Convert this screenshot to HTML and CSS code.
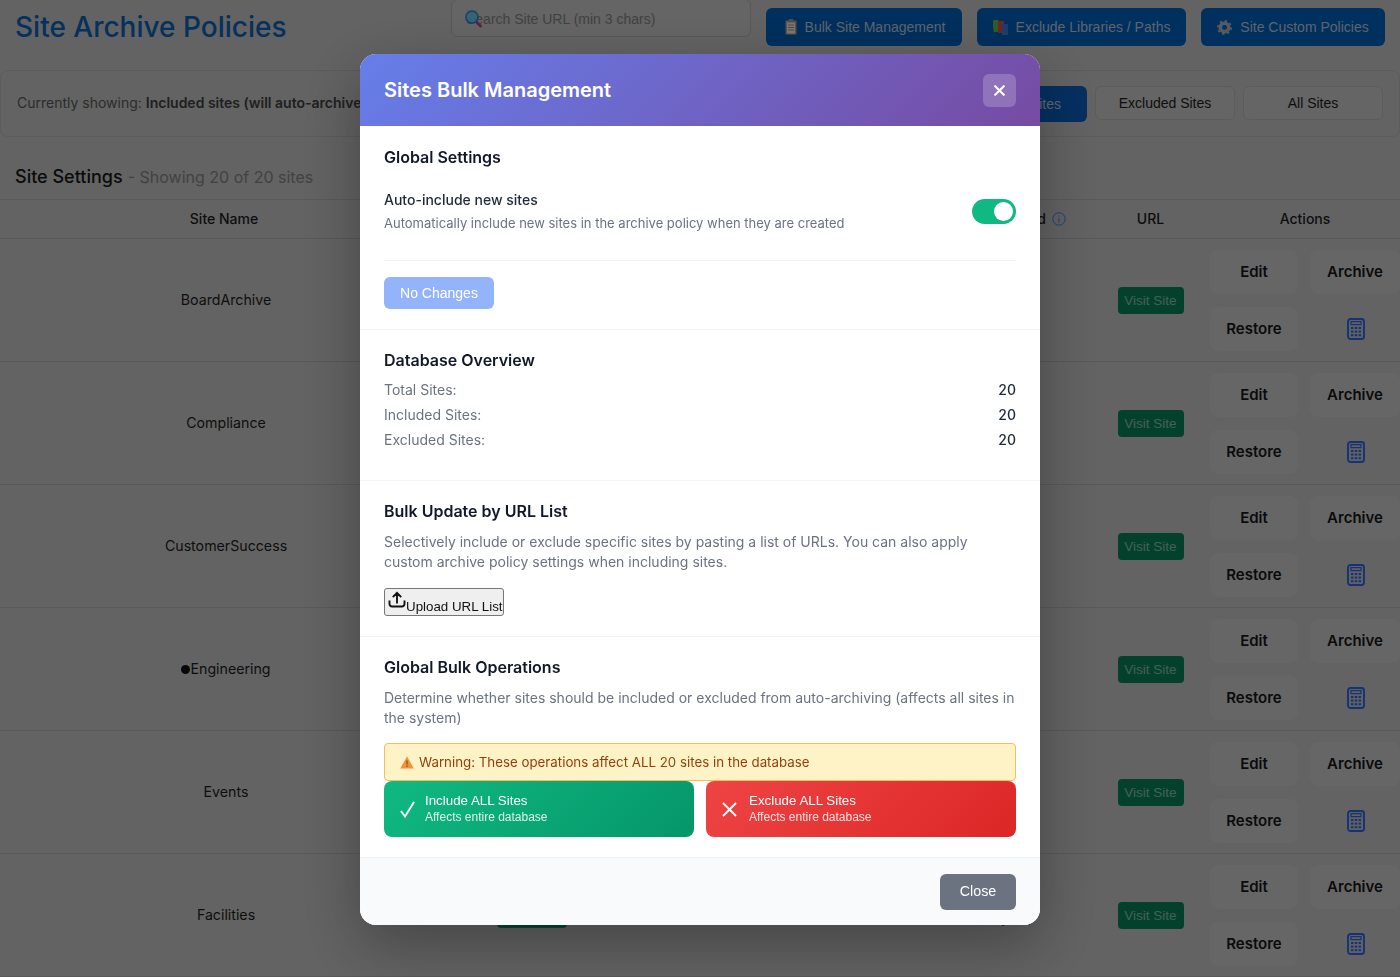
FILE: index.html
```html
<!DOCTYPE html>
<html lang="en">
<head>
<meta charset="utf-8">
<title>Site Archive Policies</title>
<link rel="stylesheet" href="styles.css">
</head>
<body>
<svg class="sprites" width="0" height="0" aria-hidden="true">
  <symbol id="calc" viewBox="0 0 18 22">
    <rect x="1" y="1" width="16" height="20" rx="2.500" fill="#7ea6ee" fill-opacity=".1" stroke="#2a66e8" stroke-width="1.900"/>
    <rect x="4" y="3.600" width="10" height="3" fill="none" stroke="#2a66e8" stroke-width="1.200"/>
    <g fill="#2a66e8">
      <rect x="4" y="9" width="2.400" height="2"/><rect x="7.800" y="9" width="2.400" height="2"/><rect x="11.600" y="9" width="2.400" height="2"/>
      <rect x="4" y="12.600" width="2.400" height="2"/><rect x="7.800" y="12.600" width="2.400" height="2"/><rect x="11.600" y="12.600" width="2.400" height="2"/>
      <rect x="4" y="16.200" width="2.400" height="2"/><rect x="7.800" y="16.200" width="2.400" height="2"/><rect x="11.600" y="16.200" width="2.400" height="2"/>
    </g>
  </symbol>
</svg>

<div class="page">
  <header class="top">
    <h1 class="title">Site Archive Policies</h1>
    <div class="search">
      <svg class="search-icon" width="18" height="18" viewBox="0 0 18 18"><path d="M10.500 11l5 5" stroke="#b4488a" stroke-width="3" stroke-linecap="round"/><circle cx="7" cy="7" r="6" fill="#6cc8ea" stroke="#2a80d8" stroke-width="1.600"/></svg>
      <input class="search-input" type="text" placeholder="Search Site URL (min 3 chars)">
    </div>
    <button class="action w-bulk">
      <svg width="12" height="16" viewBox="0 0 12 16"><rect x=".5" y="1.500" width="11" height="14" rx="1" fill="#c8a078"/><rect x="2" y="3.500" width="8" height="11" fill="#eee"/><rect x="3.500" y="0" width="5" height="3" rx="1" fill="#999"/><path d="M3 6h6M3 8.500h6M3 11h6" stroke="#999"/></svg>
      Bulk Site Management
    </button>
    <button class="action w-lib">
      <svg width="15" height="16" viewBox="0 0 15 16"><rect x="0" y="1" width="6" height="12" fill="#5cc04c" transform="rotate(-8 3 7)"/><rect x="5" y="2" width="6" height="12" fill="#e04848"/><rect x="9" y="5" width="6" height="11" fill="#3a7ad8"/></svg>
      Exclude Libraries / Paths
    </button>
    <button class="action w-custom">
      <svg width="15" height="15" viewBox="0 0 16 16"><circle cx="8" cy="8" r="4.500" fill="none" stroke="#aab4c0" stroke-width="3.800"/><circle cx="8" cy="8" r="7" fill="none" stroke="#aab4c0" stroke-width="2" stroke-dasharray="2.500 3"/></svg>
      Site Custom Policies
    </button>
  </header>

  <section class="filter">
    <p class="filter-text">Currently showing: <strong>Included sites (will auto-archive</strong></p>
    <div class="tabs">
      <button class="tab tab-active">Included Sites</button>
      <button class="tab">Excluded Sites</button>
      <button class="tab">All Sites</button>
    </div>
  </section>

  <h2 class="settings">Site Settings <span class="settings-sub">- Showing 20 of 20 sites</span></h2>

  <table class="sites">
    <colgroup><col class="c-name"><col class="c-status"><col class="c-policy"><col class="c-size"><col class="c-date"><col class="c-url"><col class="c-act"></colgroup>
    <thead>
      <tr><th class="th-name">Site Name</th><th></th><th></th><th></th><th>Last Archived <svg class="info" width="14" height="14" viewBox="0 0 14 14"><circle cx="7" cy="7" r="6.200" fill="none" stroke="#3b82f6"/><path d="M7 6v4.500M7 3.500v1.200" stroke="#3b82f6"/></svg></th><th>URL</th><th>Actions</th></tr>
    </thead>
    <tbody>
      <tr><td>BoardArchive</td><td></td><td></td><td></td><td></td><td><a class="visit">Visit Site</a></td><td><div class="acts"><button class="act">Edit</button><button class="act">Archive</button><button class="act">Restore</button><span class="calc"><svg width="18" height="22"><use href="#calc"/></svg></span></div></td></tr>
      <tr><td>Compliance</td><td></td><td></td><td></td><td></td><td><a class="visit">Visit Site</a></td><td><div class="acts"><button class="act">Edit</button><button class="act">Archive</button><button class="act">Restore</button><span class="calc"><svg width="18" height="22"><use href="#calc"/></svg></span></div></td></tr>
      <tr><td>CustomerSuccess</td><td></td><td></td><td></td><td></td><td><a class="visit">Visit Site</a></td><td><div class="acts"><button class="act">Edit</button><button class="act">Archive</button><button class="act">Restore</button><span class="calc"><svg width="18" height="22"><use href="#calc"/></svg></span></div></td></tr>
      <tr><td><span class="dot"></span>Engineering</td><td></td><td></td><td></td><td></td><td><a class="visit">Visit Site</a></td><td><div class="acts"><button class="act">Edit</button><button class="act">Archive</button><button class="act">Restore</button><span class="calc"><svg width="18" height="22"><use href="#calc"/></svg></span></div></td></tr>
      <tr><td>Events</td><td></td><td></td><td></td><td></td><td><a class="visit">Visit Site</a></td><td><div class="acts"><button class="act">Edit</button><button class="act">Archive</button><button class="act">Restore</button><span class="calc"><svg width="18" height="22"><use href="#calc"/></svg></span></div></td></tr>
      <tr><td>Facilities</td><td><span class="badge"></span></td><td></td><td><span class="sliver">(18,204)</span></td><td><span class="sliver">(1 year)</span></td><td><a class="visit">Visit Site</a></td><td><div class="acts"><button class="act">Edit</button><button class="act">Archive</button><button class="act">Restore</button><span class="calc"><svg width="18" height="22"><use href="#calc"/></svg></span></div></td></tr>
    </tbody>
  </table>
</div>

<div class="overlay">
  <div class="modal">
    <div class="modal-head">
      <h2 class="modal-title">Sites Bulk Management</h2>
      <button class="modal-x">
        <svg width="11" height="11" viewBox="0 0 11 11"><path d="M1.200 1.200l8.600 8.600M9.800 1.200l-8.600 8.600" stroke="#fff" stroke-width="2.100" stroke-linecap="round"/></svg>
      </button>
    </div>

    <section class="sec sec-first">
      <h3 class="sec-title">Global Settings</h3>
      <div class="setting">
        <div>
          <div class="setting-label">Auto-include new sites</div>
          <div class="setting-desc">Automatically include new sites in the archive policy when they are created</div>
        </div>
        <span class="toggle"><span class="knob"></span></span>
      </div>
      <button class="no-changes">No Changes</button>
    </section>

    <section class="sec sec-db">
      <h3 class="sec-title">Database Overview</h3>
      <div class="stats">
        <div class="stat"><span>Total Sites:</span><b>20</b></div>
        <div class="stat"><span>Included Sites:</span><b>20</b></div>
        <div class="stat"><span>Excluded Sites:</span><b>20</b></div>
      </div>
    </section>

    <section class="sec">
      <h3 class="sec-title">Bulk Update by URL List</h3>
      <p class="sec-text">Selectively include or exclude specific sites by pasting a list of URLs. You can also apply custom archive policy settings when including sites.</p>
      <button class="upload">
        <svg width="18" height="18" viewBox="0 0 18 18"><path d="M9 12.500V2M4.800 6.200L9 1.800l4.200 4.400M1.500 9.500v3.500a2.500 2.500 0 0 0 2.500 2.500h10a2.500 2.500 0 0 0 2.500-2.500V9.500" fill="none" stroke="#111" stroke-width="1.900"/></svg>
        <span class="upload-text">Upload URL List</span>
      </button>
    </section>

    <section class="sec sec-last">
      <h3 class="sec-title">Global Bulk Operations</h3>
      <p class="sec-text">Determine whether sites should be included or excluded from auto-archiving (affects all sites in the system)</p>
      <div class="warning">
        <svg width="14" height="13" viewBox="0 0 14 13"><path d="M7 .500L13.800 12.500H.2z" fill="#f0933a"/><path d="M7 4.500v4M7 9.600v1.400" stroke="#7a4a10" stroke-width="1.100"/></svg>
        Warning: These operations affect ALL 20 sites in the database
      </div>
      <div class="ops">
        <button class="op op-in">
          <svg class="op-icon" width="15" height="17" viewBox="0 0 15 17"><path d="M1 10l4 5.500L14 1" fill="none" stroke="#fff" stroke-width="1.900"/></svg>
          <span class="op-text"><span class="op-main">Include ALL Sites</span><span class="op-sub">Affects entire database</span></span>
        </button>
        <button class="op op-ex">
          <svg class="op-icon" width="15" height="15" viewBox="0 0 15 15"><path d="M1 1l13 13M14 1L1 14" fill="none" stroke="#fff" stroke-width="1.900"/></svg>
          <span class="op-text"><span class="op-main">Exclude ALL Sites</span><span class="op-sub">Affects entire database</span></span>
        </button>
      </div>
    </section>

    <footer class="modal-foot"><button class="close">Close</button></footer>
  </div>
</div>
</body>
</html>
```

FILE: styles.css
```css
* { box-sizing: border-box; }
html, body { margin: 0; height: 100%; overflow: hidden; }
body { background: #c6c6c6; font-family: Inter, "Liberation Sans", sans-serif; color: #1f2937; }
button { font-family: "Liberation Sans", Arial, sans-serif; cursor: pointer; }
.sprites { position: absolute; }
.page { width: 1400px; height: 977px; background: #c6c6c6; overflow: hidden; }

.top { display: flex; align-items: flex-start; height: 70px; padding: 0 15px; }
.title { margin: 5px 0 0; font-size: 28px; line-height: 44px; font-weight: 500; color: #0a62b8; }
.search { position: relative; margin: -1px 15px 0 auto; width: 300px; height: 38px; }
.search-icon { position: absolute; left: 14px; top: 11px; }
.search-input { width: 100%; height: 100%; padding: 1px 14px 0; border: 1px solid #b0b0b0; border-radius: 6px; background: #cacaca; font: 14px "Liberation Sans", sans-serif; }
.search-input::placeholder { color: #848484; opacity: 1; }
.action { display: flex; align-items: center; justify-content: center; gap: 8px; height: 38px; margin-top: 8px; margin-left: 15px; padding: 0; border: 0; border-radius: 6px; background: #0060bc; color: #b8c8dc; font-size: 14px; }
.search + .action { margin-left: 0; padding-left: 2px; }
.w-bulk { width: 196px; }
.w-lib { width: 209px; }
.w-custom { width: 184px; }

.filter { display: flex; align-items: center; justify-content: space-between; height: 67px; padding: 0 16px; border: 1px solid #b8b8b8; border-radius: 8px; }
.filter-text { margin: 0 0 2px; font-size: 14px; color: #585858; }
.filter-text strong { font-weight: 600; color: #404040; }
.tabs { display: flex; gap: 8px; }
.tab { width: 140px; height: 34px; background: #cacaca; border: 1px solid #b8b8b8; border-radius: 6px; font-size: 14px; color: #1c1c1c; }
.tab-active { height: 36px; border: 0; background: #0a60c0; color: #b8cfe8; }

.settings { display: flex; gap: 5px; align-items: baseline; margin: 0; height: 62px; padding: 28px 15px 0; font-size: 18px; line-height: 24px; font-weight: 500; color: #161616; }
.settings-sub { font-size: 16px; font-weight: 400; color: #848484; }

.sites { width: 1400px; table-layout: fixed; border-collapse: collapse; font-size: 14.200px; color: #1c1c1c; }
.c-name { width: 452px; } .c-status { width: 160px; } .c-policy { width: 139px; } .c-size { width: 178px; } .c-date { width: 162px; } .c-url { width: 119px; } .c-act { width: 190px; }
.sites th { height: 39px; padding: 0 0 2px; font-size: 14px; font-weight: 500; text-align: center; border-top: 1px solid #b2b2b2; border-bottom: 1px solid #b2b2b2; }
.sites .th-name { padding-right: 4px; }
.info { vertical-align: -2px; margin-left: 2px; }
.sites td { height: 123px; padding: 0; text-align: center; border-bottom: 1px solid #b2b2b2; line-height: 18px; }
.dot { display: inline-block; width: 9px; height: 9px; border-radius: 50%; background: #111; }
.badge { display: inline-block; width: 70px; height: 26px; border-radius: 4px; background: #0d8f62; vertical-align: middle; }
.sliver { position: relative; top: 3px; font-size: 13px; }
.visit { display: block; width: 66px; height: 27px; margin: 0 auto; border-radius: 4px; background: #08835a; color: #88c0a8; font: 13.500px/27px "Liberation Sans", sans-serif; }
.acts { display: grid; grid-template-columns: 88px 90px; column-gap: 12px; row-gap: 13px; }
.act { height: 44px; border: 0; border-radius: 8px; background: #cdcdcd; font: 600 15px Inter, sans-serif; color: #161616; }
.calc { display: flex; align-items: center; justify-content: center; padding-left: 2px; }

.overlay { position: fixed; inset: 0; display: flex; justify-content: center; align-items: flex-start; padding-top: 54px; background: rgba(0, 0, 0, .5); }
.modal { width: 680px; background: #fff; border-radius: 16px; overflow: hidden; box-shadow: 0 20px 60px rgba(0, 0, 0, .3); }
.modal-head { display: flex; align-items: center; justify-content: space-between; height: 72px; padding: 0 24px; background: linear-gradient(135deg, #667eea 0%, #764ba2 100%); }
.modal-title { margin: 0; font-size: 20px; line-height: 28px; font-weight: 600; color: #fff; }
.modal-x { display: flex; align-items: center; justify-content: center; width: 33px; height: 33px; padding: 0; border: 0; border-radius: 6px; background: rgba(255, 255, 255, .2); }

.sec { padding: 19px 24px 20px; border-bottom: 1px solid #f3f4f6; }
.sec-first { padding-top: 20px; }
.sec-db { padding-bottom: 28px; }
.sec-last { border-bottom: 0; }
.sec-title { margin: 0; font-size: 16px; line-height: 22px; font-weight: 600; color: #111827; }
.setting { display: flex; justify-content: space-between; align-items: flex-start; margin-top: 21px; padding-bottom: 27px; border-bottom: 1px solid #f3f4f6; }
.setting-label { font-size: 14px; line-height: 22px; font-weight: 500; color: #1f2937; }
.setting-desc { margin-top: 2px; font-size: 13px; line-height: 20px; color: #6b7280; }
.toggle { display: flex; justify-content: flex-end; align-items: center; width: 44px; height: 25px; margin-top: 10px; padding-right: 3px; border-radius: 13px; background: #10b981; }
.knob { width: 19px; height: 19px; border-radius: 50%; background: #fff; }
.no-changes { display: block; width: 110px; height: 32px; margin-top: 16px; padding: 0; border: 0; border-radius: 6px; background: #93b4fb; color: #fff; font-size: 14px; }

.stats { margin-top: 6px; }
.stat { display: flex; justify-content: space-between; height: 25px; font-size: 14px; line-height: 25px; color: #6b7280; }
.stat b { font-weight: 500; color: #1f2937; }

.sec-text { margin: 10px 0 0; font-size: 14px; line-height: 20px; color: #6b7280; }
.upload { display: flex; align-items: flex-end; width: 120px; height: 28px; margin-top: 16px; padding: 0 0 1px 3px; border: 1px solid #767676; border-radius: 3px; background: #efefef; color: #111; font-size: 13.333px; }
.upload svg { margin-bottom: 5px; }
.upload-text { white-space: nowrap; }

.warning { display: flex; align-items: center; gap: 5px; height: 38px; margin-top: 15px; padding-left: 15px; border: 1px solid #f1bf5b; border-radius: 4px; background: #fef3c7; color: #92400e; font-size: 13.300px; }
.ops { display: grid; grid-template-columns: 310px 310px; column-gap: 12px; }
.op { display: flex; align-items: center; height: 56px; padding: 0 0 0 16px; border: 0; border-radius: 8px; color: #fff; text-align: left; }
.op-in { background: linear-gradient(135deg, #10b981, #059669); }
.op-ex { background: linear-gradient(135deg, #ef4444, #dc2626); }
.op-in .op-icon { margin-right: 10px; }
.op-ex .op-icon { margin-right: 12px; }
.op-text { display: flex; flex-direction: column; margin-top: -1px; }
.op-main { font-size: 13.333px; line-height: 17px; }
.op-sub { font-size: 12px; line-height: 17px; opacity: .85; }

.modal-foot { display: flex; justify-content: flex-end; height: 68px; padding-top: 16px; padding-right: 24px; border-top: 1px solid #f0f1f3; background: #f9fafb; }
.close { width: 76px; height: 36px; padding: 0 0 2px; border: 0; border-radius: 6px; background: #6b7280; color: #fff; font-size: 14.300px; }
```
